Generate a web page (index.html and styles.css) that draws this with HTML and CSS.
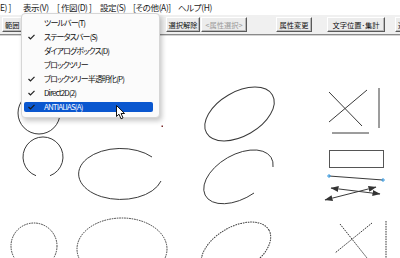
FILE: index.html
```html
<!DOCTYPE html>
<html lang="ja">
<head>
<meta charset="utf-8">
<link rel="stylesheet" href="styles.css">
</head>
<body>
<div class="app">
  <div class="menubar">
    <span class="mi m-edit">E) ]</span>
    <span class="mi m-view">表示(V)</span>
    <span class="mi m-draw">[ 作図(D) ]</span>
    <span class="mi m-set">設定(S)</span>
    <span class="mi m-other">[その他(A)]</span>
    <span class="mi m-help">ヘルプ(H)</span>
  </div>
  <div class="toolbar">
    <span class="btn b-range">範囲</span>
    <span class="btn b-sel">選択解除</span>
    <span class="btn dis b-attr">&lt;属性選択&gt;</span>
    <span class="btn b-chg">属性変更</span>
    <span class="btn b-pos">文字位置･集計</span>
    <span class="btn b-next">選</span>
  </div>
  <div class="canvas">
    <svg class="drawing" width="400" height="223" viewBox="0 35 400 223">
      <defs>
        <marker id="ah" viewBox="0 0 8 6" refX="7.5" refY="3" markerWidth="8" markerHeight="6" markerUnits="userSpaceOnUse" orient="auto-start-reverse">
          <path d="M0 0 L8 3 L0 6 Z" fill="#333"/>
        </marker>
      </defs>
      <g fill="none" stroke="#3a3a3a" stroke-width="1">
        <circle cx="39" cy="112" r="21"/>
        <path d="M36 174.7 A20 20 0 1 1 50 174.7"/>
        <path d="M152 156 A42 25.5 0 1 0 161 180"/>
        <ellipse cx="239.5" cy="113" rx="38" ry="22" transform="rotate(-30 239.5 113)"/>
        <path d="M273 166 A38 22 -30 1 0 254 192"/>
        <line x1="329" y1="91" x2="362" y2="125"/>
        <line x1="367" y1="89" x2="329" y2="121"/>
        <line x1="379" y1="87" x2="379" y2="127"/>
        <line x1="332" y1="132" x2="369" y2="132"/>
        <rect x="329.5" y="149.5" width="54" height="17" stroke="#555"/>
        <line x1="329" y1="175" x2="383" y2="179"/>
        <line x1="331" y1="187" x2="380" y2="193" marker-start="url(#ah)" marker-end="url(#ah)"/>
        <line x1="325" y1="199" x2="376" y2="186" marker-start="url(#ah)" marker-end="url(#ah)"/>
      </g>
      <g fill="none" stroke="#3a3a3a" stroke-width="1" stroke-dasharray="1.6 0.9">
        <circle cx="34" cy="245" r="23"/>
        <ellipse cx="122" cy="248" rx="45" ry="31"/>
        <ellipse cx="236" cy="248" rx="38" ry="22" transform="rotate(-30 236 248)"/>
        <line x1="340" y1="223" x2="367" y2="257"/>
        <line x1="372" y1="222" x2="335" y2="252"/>
        <line x1="386" y1="220" x2="386" y2="258"/>
      </g>
      <g stroke="#3b9be0" stroke-width="1">
        <line x1="327" y1="175" x2="331" y2="175"/>
        <line x1="329" y1="173" x2="329" y2="177"/>
        <line x1="381" y1="179" x2="385" y2="179"/>
        <line x1="383" y1="177" x2="383" y2="181"/>
      </g>
      <rect x="161.5" y="124.5" width="1.5" height="1.5" fill="#7a2a2a"/>
    </svg>
  </div>

  <div class="menu">
    <div class="item"><span class="chk"></span><span class="lbl">ツールバー(T)</span></div>
    <div class="item"><span class="chk"><svg width="7" height="6" viewBox="0 0 7 6"><polyline points="0.5,3 2.5,5 6.5,0.8" fill="none" stroke="#222" stroke-width="1.2"/></svg></span><span class="lbl">ステータスバー(S)</span></div>
    <div class="item"><span class="chk"></span><span class="lbl">ダイアログボックス(D)</span></div>
    <div class="item"><span class="chk"></span><span class="lbl">ブロックツリー</span></div>
    <div class="item"><span class="chk"><svg width="7" height="6" viewBox="0 0 7 6"><polyline points="0.5,3 2.5,5 6.5,0.8" fill="none" stroke="#222" stroke-width="1.2"/></svg></span><span class="lbl">ブロックツリー半透明化(P)</span></div>
    <div class="item"><span class="chk"><svg width="7" height="6" viewBox="0 0 7 6"><polyline points="0.5,3 2.5,5 6.5,0.8" fill="none" stroke="#222" stroke-width="1.2"/></svg></span><span class="lbl">Direct2D(2)</span></div>
    <div class="item active"><span class="chk"><svg width="7" height="6" viewBox="0 0 7 6"><polyline points="0.5,3 2.5,5 6.5,0.8" fill="none" stroke="#1a1a1a" stroke-width="1.2"/></svg></span><span class="lbl">ANTIALIAS(A)</span></div>
  </div>

  <svg class="cursor" width="10" height="15" viewBox="0 0 10 15">
    <path d="M0.5 0.5 L0.5 11.5 L3 9.2 L5 13.8 L7 12.9 L5.1 8.5 L8.6 8.5 Z" fill="#fff" stroke="#111" stroke-width="1" stroke-linejoin="round"/>
  </svg>
</div>
</body>
</html>
```

FILE: styles.css
```css
* { box-sizing: border-box; }
html, body { margin: 0; padding: 0; background: #fff; }
body {
  font-family: "Noto Sans CJK JP", "Noto Sans", sans-serif;
  font-feature-settings: "palt";
  color: #1a1a1a;
}
.app {
  position: relative;
  width: 400px;
  height: 258px;
  overflow: hidden;
  background: #fff;
}
.menubar {
  display: flex;
  height: 15px;
  align-items: center;
  font-size: 8.5px;
  letter-spacing: -0.4px;
  line-height: 15px;
  white-space: nowrap;
  background: #fff;
}
.mi { display: block; flex: 0 0 auto; }
.m-edit { width: 23px; }
.m-view { width: 34px; }
.m-draw { width: 43px; }
.m-set { width: 33px; }
.m-other { width: 45px; }

.toolbar {
  display: flex;
  align-items: center;
  height: 20px;
  padding: 0 0 0 2px;
  background: #f0f0f0;
  border-bottom: 1px solid #8a8a8a;
  box-shadow: 0 1px 0 #d4d4d4;
  font-size: 7.25px;
  white-space: nowrap;
  overflow: hidden;
}
.btn {
  display: flex;
  flex-shrink: 0;
  align-items: center;
  justify-content: center;
  height: 15px;
  padding: 0 2px;
  background: #ececec;
  border-top: 1px solid #fff;
  border-left: 1px solid #fff;
  border-right: 1px solid #5a5a5a;
  border-bottom: 1px solid #5a5a5a;
  box-shadow: inset -1px -1px 0 #b8b8b8;
  color: #111;
}
.btn.dis { color: #9a9a9a; }
.b-range { width: 30px; justify-content: flex-start; padding-left: 2px; }
.b-sel { width: 34px; margin-left: 134px; }
.b-attr { width: 46px; margin-left: 1px; }
.b-chg { width: 36px; margin-left: 29px; }
.b-pos { width: 58px; margin-left: 15px; }
.b-next { width: 20px; margin-left: 10px; justify-content: flex-start; }

.canvas {
  height: 222px;
  margin-top: 1px;
  background: #fff;
}
.drawing { display: block; }

.menu {
  position: absolute;
  left: 21px;
  top: 13px;
  width: 139px;
  height: 105px;
  display: flex;
  flex-direction: column;
  gap: 4px;
  padding-top: 3.5px;
  background: #fbfbfb;
  border: 1px solid #d6d6d6;
  border-radius: 4px;
  box-shadow: 2px 3px 5px rgba(0, 0, 0, 0.22);
  font-size: 8px;
  letter-spacing: -0.9px;
  color: #111;
}
.item {
  display: flex;
  align-items: center;
  height: 10px;
  margin: 0 6px 0 2px;
  border-radius: 2px;
  line-height: 10px;
  white-space: nowrap;
}
.chk {
  display: flex;
  align-items: center;
  width: 20px;
  height: 10px;
  padding-left: 4px;
}
.chk svg { display: block; }
.item.active {
  background: #0a57cf;
  color: #f2f6ff;
}
.cursor {
  position: absolute;
  left: 116px;
  top: 105px;
}
```
